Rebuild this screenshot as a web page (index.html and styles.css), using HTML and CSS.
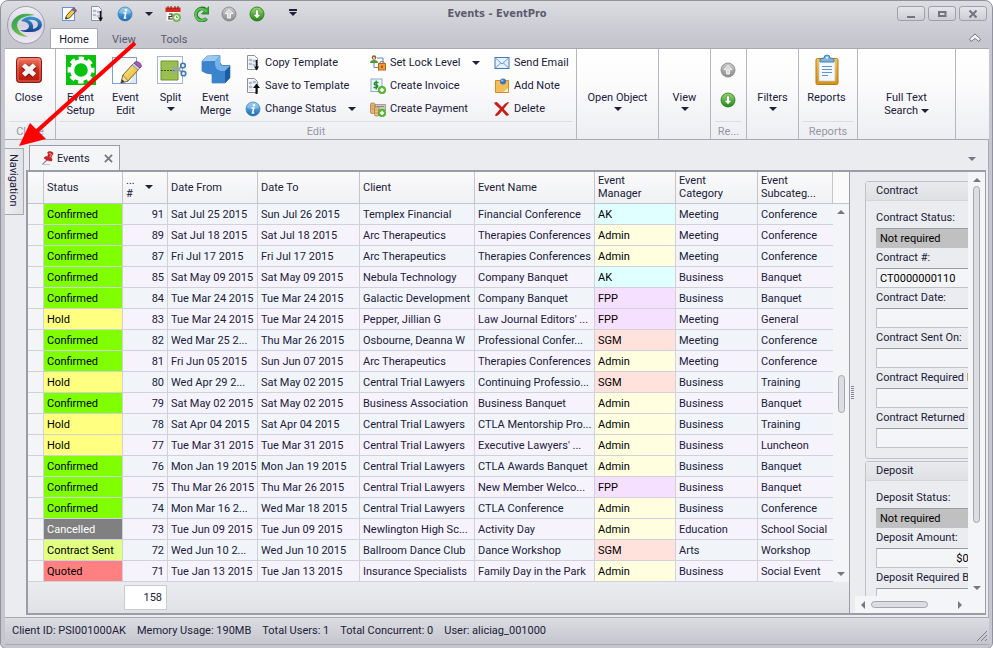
FILE: index.html
```html
<!DOCTYPE html>
<html lang="en">
<head>
  <meta charset="UTF-8" />
  <meta name="viewport" content="width=device-width, initial-scale=1.0"/>
  <title>Events - EventPro</title>
  <link rel="stylesheet" href="styles.css">
</head>
<body>
  <!-- icon sprite -->
  <svg class="sprite" aria-hidden="true">
    <defs>
      <linearGradient id="gRed" x1="0" y1="0" x2="0" y2="1"><stop offset="0" stop-color="#ee7d68"/><stop offset=".5" stop-color="#d02a1c"/><stop offset="1" stop-color="#b8150c"/></linearGradient>
      <linearGradient id="gBlue" x1="0" y1="0" x2="0" y2="1"><stop offset="0" stop-color="#7cc4ee"/><stop offset="1" stop-color="#1668b4"/></linearGradient>
      <linearGradient id="gGreen" x1="0" y1="0" x2="0" y2="1"><stop offset="0" stop-color="#9ad872"/><stop offset="1" stop-color="#1c8a10"/></linearGradient>
      <linearGradient id="gGrey" x1="0" y1="0" x2="0" y2="1"><stop offset="0" stop-color="#cdcdcd"/><stop offset="1" stop-color="#8a8a8a"/></linearGradient>
      <linearGradient id="gGold" x1="0" y1="0" x2="0" y2="1"><stop offset="0" stop-color="#f7c64f"/><stop offset="1" stop-color="#d98f12"/></linearGradient>
      <linearGradient id="gOrb" x1="0" y1="0" x2="0" y2="1"><stop offset="0" stop-color="#f3f0f8"/><stop offset=".5" stop-color="#d6cfe2"/><stop offset="1" stop-color="#efeaf5"/></linearGradient>
      <linearGradient id="gSwoosh" x1="0" y1="0" x2="1" y2="1"><stop offset="0" stop-color="#1f9a55"/><stop offset="1" stop-color="#9bd53a"/></linearGradient>
      <linearGradient id="gEye" x1="0" y1="0" x2="0" y2="1"><stop offset="0" stop-color="#3a9ad0"/><stop offset="1" stop-color="#133f8c"/></linearGradient>
      <linearGradient id="gPencil" x1="0" y1="0" x2="1" y2="1"><stop offset="0" stop-color="#fff3a0"/><stop offset="1" stop-color="#e2a818"/></linearGradient>
    </defs>
    <symbol id="i-edit" viewBox="0 0 32 32">
      <rect x="2.500" y="3.500" width="24" height="26" fill="#fcfdff" stroke="#7f9fd0"/>
      <path d="M20 29h6V14z" fill="#dfe8f5"/>
      <path d="M11 29l2-8L23 10l6 5-11 12z" fill="url(#gPencil)" stroke="#7b6424"/>
      <path d="M11 29l2-8 5 6z" fill="#f2dcb4" stroke="#7b6424" stroke-width=".7"/>
      <path d="M22 11l2-2 6 5-2 2z" fill="#c9ccd6" stroke="#6d7080" stroke-width=".6"/>
      <path d="M24 9l2-1.500q5 .5 5.500 5L30 14z" fill="#a95cb8" stroke="#6b3480" stroke-width=".8"/>
      <path d="M11 29l1-3.500 2.500 2z" fill="#27304d"/>
    </symbol>
    <symbol id="i-edit-small" viewBox="0 0 16 16">
      <rect x="1.500" y="1.500" width="12" height="13" fill="#fcfdff" stroke="#6d92cf"/>
      <path d="M4.500 13l1-3.500L11.500 3l3 2.500-6 6.500z" fill="#f3cb3c" stroke="#3b3a40" stroke-width=".9"/>
      <path d="M11 3.500L12.500 2q2.500.5 3 3L14.500 6z" fill="#9a5cb4" stroke="#4d3068" stroke-width=".6"/>
      <path d="M4.500 13l.5-2 1.500 1.200z" fill="#222"/>
    </symbol>
    <symbol id="i-copy" viewBox="0 0 16 16">
      <path d="M2.500.500h7l3 3v11h-10z" fill="#f6f8fb" stroke="#8b919c"/>
      <path d="M4 4h3v2H4zM8 5h3v2H8zM4 8h3v2H4zM8 9h2v2H8zM4 12h4" fill="#b3becd" stroke="#b3becd" stroke-width=".5"/>
      <path d="M11.500 5v8" stroke="#111" stroke-width="1.500"/><path d="M9 11.500h5l-2.500 4z" fill="#111"/>
    </symbol>
    <symbol id="i-save" viewBox="0 0 16 16">
      <path d="M2.500.500h7l3 3v11h-10z" fill="#f6f8fb" stroke="#8b919c"/>
      <path d="M4 4h3v2H4zM8 3h3v2H8zM4 8h3v2H4zM4 12h4" fill="#b3becd" stroke="#b3becd" stroke-width=".5"/>
      <path d="M11.500 16V8" stroke="#111" stroke-width="2"/><path d="M8 10h7l-3.500-4.500z" fill="#111"/>
    </symbol>
    <symbol id="i-info" viewBox="0 0 16 16">
      <circle cx="8" cy="8" r="7" fill="url(#gBlue)" stroke="#2f78b6" stroke-width=".7"/>
      <path d="M2 7a6 5.500 0 0 1 12 0q-6 2-12 0z" fill="#fff" opacity=".25"/>
      <circle cx="9" cy="4.300" r="1.200" fill="#fff"/><path d="M6.500 7h2.300l-1.300 5h1.800" fill="none" stroke="#fff" stroke-width="1.500"/>
    </symbol>
    <symbol id="i-calendar" viewBox="0 0 16 16">
      <rect x="1" y="2.500" width="14" height="12.500" fill="#f8f7f2" stroke="#d5d1c6" stroke-width=".7"/>
      <path d="M.5 1.500h15V6H.5z" fill="#d02a20"/><path d="M3 0v3M6 0v3M10 0v3M13 0v3" stroke="#8c140e"/>
      <path d="M4 8h3v2.500H4V13h3.500" fill="none" stroke="#333" stroke-width="1.200"/>
      <circle cx="11.500" cy="11.500" r="4" fill="#8cc46a" stroke="#57a03b" stroke-width=".8"/><circle cx="11.500" cy="11.500" r="2.300" fill="#f2f8ee"/><path d="M11.500 10v1.500H13" fill="none" stroke="#4b8f34" stroke-width=".8"/>
    </symbol>
    <symbol id="i-refresh" viewBox="0 0 16 16">
      <path d="M13.500 12.500A6 6 0 1 1 12.500 3.500" fill="none" stroke="#1b7c22" stroke-width="3.800"/>
      <path d="M16 .5V8H8.500z" fill="#35a534" stroke="#1b7c22" stroke-width=".8"/>
      <path d="M13 12.500A5.900 5.900 0 1 1 12.200 4L13.500 5.500" fill="none" stroke="#5cc455" stroke-width="2.200"/>
    </symbol>
    <symbol id="i-up" viewBox="0 0 16 16">
      <circle cx="8" cy="8" r="7" fill="url(#gGrey)" stroke="#7f7f7f" stroke-width=".8"/>
      <path d="M8 3.500l4 4H9.500v4.500h-3V7.500H4z" fill="#d9d9d9" stroke="#f4f4f4"/>
    </symbol>
    <symbol id="i-down" viewBox="0 0 16 16">
      <circle cx="8" cy="8" r="7" fill="url(#gGreen)" stroke="#266b18" stroke-width=".8"/>
      <path d="M8 12.500l4-4H9.500V4h-3v4.500H4z" fill="#fff" stroke="#1f6a12" stroke-width=".4"/>
    </symbol>
    <symbol id="i-close" viewBox="0 0 32 32">
      <rect x="3.500" y="3.500" width="25" height="25" rx="3" fill="url(#gRed)" stroke="#8f1a10"/>
      <rect x="5" y="5" width="22" height="22" rx="2" fill="none" stroke="#f4a899" opacity=".6"/>
      <path d="M10.500 11.500l11 10M21.500 11.500l-11 10" stroke="#7d120b" stroke-width="6.500"/>
      <path d="M10.500 11l11 10M21.500 11l-11 10" stroke="#f5f2f2" stroke-width="5"/>
    </symbol>
    <symbol id="i-gear" viewBox="0 0 32 32">
      <path d="M1 1h30v30H1z" fill="#08c20e"/>
      <circle cx="16" cy="16" r="8.800" fill="none" stroke="#fff" stroke-width="4"/>
      <circle cx="16" cy="16" r="11.500" fill="none" stroke="#fff" stroke-width="4" stroke-dasharray="5.200 3.830" stroke-dashoffset="2.600"/>
    </symbol>
    <symbol id="i-split" viewBox="0 0 32 32">
      <rect x="2.500" y="2.500" width="25" height="27" fill="#fdfdfe" stroke="#a4b6d2"/>
      <path d="M6 7h17v19H6z" fill="#9cc050" stroke="#6d9330"/>
      <path d="M6 16.500h17" stroke="#3d5a17" stroke-dasharray="2 1"/>
      <path d="M17 13l11 5M17 19l11-7" stroke="#9aa3b4" stroke-width="2"/>
      <circle cx="28" cy="11.500" r="2.300" fill="#eaf2fb" stroke="#3f78ba" stroke-width="1.600"/><circle cx="28.500" cy="19.500" r="2.300" fill="#eaf2fb" stroke="#3f78ba" stroke-width="1.600"/>
    </symbol>
    <symbol id="i-merge" viewBox="0 0 32 32">
      <path d="M2 7.500L7 2l13-.5v7l2 3h8v12L25 29H12v-9q-6 0-10-3z" fill="#3f87cf" stroke="#2463a6" stroke-width=".6"/>
      <path d="M2 7.500L7 2l13-.5-5 5.500z" fill="#9bc8ef"/>
      <path d="M15 7l5-5.500v7q0 4 5 3.500h5l-5 5q-10 1-10-6z" fill="#74b1e6"/>
      <path d="M15 7v3q0 6 6 7h4v12H12v-9q-5 0-10-3V7.500z" fill="#3b83cc"/>
      <path d="M25 17l5-5v12l-5 5z" fill="#1d5ba4"/>
    </symbol>
    <symbol id="i-lock" viewBox="0 0 16 16">
      <path d="M7 3h6v5M4 8v4.500h5" fill="none" stroke="#5d86b8"/>
      <circle cx="4" cy="2.500" r="2.300" fill="#9b5a2e"/><circle cx="4" cy="3" r="1.200" fill="#eebf92"/><path d="M0 8q0-3 4-3t4 3z" fill="#4c9a35"/>
      <path d="M10 9V7.500q2-2.500 4 0V9" fill="none" stroke="#888" stroke-width="1.200"/>
      <rect x="8.500" y="8.500" width="7" height="6.500" fill="#f19a38" stroke="#ba651a"/><path d="M12 10.500v2.500" stroke="#7d400c" stroke-width="1.300"/>
    </symbol>
    <symbol id="i-invoice" viewBox="0 0 16 16">
      <rect x="1" y="1" width="11" height="12.500" fill="#eef7fb" stroke="#8aaec5"/>
      <path d="M8.500 4.500H5q-1.500 1.200 0 2.400h2q1.500 1.300 0 2.600H3.500M6.200 2.500v9" fill="none" stroke="#1f8c26" stroke-width="1.300"/>
      <circle cx="12" cy="12" r="3.800" fill="#5fbf36" stroke="#3d9420" stroke-width=".6"/><path d="M12 10v4M10 12h4" stroke="#fff" stroke-width="1.500"/>
    </symbol>
    <symbol id="i-payment" viewBox="0 0 16 16">
      <path d="M5 3.500h10.500v6H5z" fill="#c9c7c0" stroke="#8a857a" stroke-width=".7"/><path d="M7 5.500h7" stroke="#908b80"/>
      <rect x=".5" y="2" width="4.500" height="10.500" rx="1.500" fill="#e2b47a" stroke="#a77236" stroke-width=".7"/>
      <rect x="4.500" y="6" width="4.500" height="9" rx="1.500" fill="#e9bf86" stroke="#a77236" stroke-width=".7"/><path d="M1 5h4M1 8h4M5 9h4M5 12h4" stroke="#b98547" stroke-width=".6"/>
      <circle cx="12" cy="12" r="3.800" fill="#5fbf36" stroke="#3d9420" stroke-width=".6"/><path d="M12 10v4M10 12h4" stroke="#fff" stroke-width="1.500"/>
    </symbol>
    <symbol id="i-mail" viewBox="0 0 16 16">
      <rect x="1" y="2.500" width="14" height="11" fill="#e5f1fb" stroke="#4079bb"/>
      <path d="M1.500 3l6.500 6 6.500-6M1.500 13l5-5M14.500 13l-5-5" fill="none" stroke="#5a90cb" stroke-width=".9"/>
    </symbol>
    <symbol id="i-note" viewBox="0 0 16 16">
      <path d="M1.500 2.500h13v12h-13z" fill="#f3bd58" stroke="#d38b25"/><path d="M9 14l5-4v4z" fill="#fff0cb"/>
      <circle cx="9" cy="3.500" r="3" fill="#3a73bd"/><circle cx="8.300" cy="2.700" r="1.100" fill="#a5c9ee"/>
    </symbol>
    <symbol id="i-delete" viewBox="0 0 16 16">
      <path d="M.5 1.500q2-1 3 0l4.500 4.500q3-4 6-5 2 0 .5 1L9.800 8l5.200 5.500q-1 2-3 1L8 10q-3 4-5 5-2.500 0-2-1l5-6-5.500-5z" fill="#cd1c16"/>
    </symbol>
    <symbol id="i-report" viewBox="0 0 32 32">
      <rect x="5" y="4.500" width="22" height="26" rx="1.500" fill="url(#gGold)" stroke="#b87b10"/>
      <path d="M8 7h16v20H8z" fill="#f3f8fd" stroke="#b9cde0" stroke-width=".7"/>
      <path d="M11 12.500h10M11 15.500h10M11 18.500h10M11 21.500h6" stroke="#6492c8"/>
      <path d="M9 8V6q0-2 4-2 0-3 3-3t3 3q4 0 4 2v2z" fill="#7fb3de" stroke="#427fb5"/><circle cx="16" cy="3.800" r="1" fill="#fff"/>
    </symbol>
    <symbol id="i-pin" viewBox="0 0 16 16">
      <path d="M2 15l5-5" stroke="#888" stroke-width="1.300"/><path d="M1 15.500h9" stroke="#bbb"/>
      <path d="M8 1q3-1.500 5.500 1 1 2-.8 2.500L11.500 8q2 1.500 .5 3.500Q7 12 3.500 8q1-2 4-1.500l1-3Q7 2.500 8 1z" fill="#d21f24" stroke="#9d1115" stroke-width=".6"/>
      <path d="M9 2.500l3 1-2 4" fill="none" stroke="#f39a96"/>
    </symbol>
  </svg>

  <div class="window">
    <header class="titlebar">
      <div class="quick-access">
        <button aria-label="Event Edit"><svg><use href="#i-edit-small"/></svg></button>
        <button aria-label="Copy Template"><svg><use href="#i-copy"/></svg></button>
        <button aria-label="Change Status"><svg><use href="#i-info"/></svg></button>
        <button class="narrow" aria-label="Status options"><i class="caret"></i></button>
        <button aria-label="Calendar"><svg><use href="#i-calendar"/></svg></button>
        <button aria-label="Refresh"><svg><use href="#i-refresh"/></svg></button>
        <button aria-label="Previous"><svg><use href="#i-up"/></svg></button>
        <button aria-label="Next"><svg><use href="#i-down"/></svg></button>
        <button class="customize" aria-label="Customize toolbar"><i class="caret lined"></i></button>
      </div>
      <h1>Events - EventPro</h1>
      <div class="window-buttons">
        <button aria-label="Minimize"><svg viewBox="0 0 12 10"><path d="M2 8h8" stroke="#74747f" stroke-width="2"/></svg></button>
        <button aria-label="Maximize"><svg viewBox="0 0 12 10"><path d="M3 3h6.500v4H3z" fill="none" stroke="#74747f" stroke-width="2"/></svg></button>
        <button aria-label="Close window"><svg viewBox="0 0 12 10"><path d="M2.500 1.500l7 7M9.500 1.500l-7 7" stroke="#74747f" stroke-width="2"/></svg></button>
      </div>
    </header>

    <button class="orb" aria-label="Application menu">
      <svg viewBox="0 0 40 40">
        <circle cx="20" cy="20" r="18.500" fill="url(#gOrb)" stroke="#a19dae"/>
        <path d="M29 10Q15 6 8 14q-7 9 5 16 5 2 9 2-11-5-11-12 1-9 18-10z" fill="url(#gSwoosh)"/>
        <path fill-rule="evenodd" d="M15 16q5-6 13-4 8 2 8 8-1 8-16 7-4 0-6-2 9 1 9-4 0-4-8-5zM22 15q6 2 5 9 5-1 5-5-1-5-10-4z" fill="url(#gEye)"/>
      </svg>
    </button>

    <nav class="ribbon-tabs">
      <a href="#" class="active">Home</a>
      <a href="#">View</a>
      <a href="#">Tools</a>
      <button class="collapse" aria-label="Collapse ribbon"><svg viewBox="0 0 14 10"><path d="M1.500 6L7 1l5.500 5-1.500 2.500L7 5.500 3 8.500z" fill="#f4f4f7" stroke="#777783"/></svg></button>
    </nav>

    <section class="ribbon">
      <div class="group g-close">
        <div class="items">
          <button class="large"><svg><use href="#i-close"/></svg><span>Close</span></button>
        </div>
        <div class="caption">Close</div>
      </div>
      <div class="group g-edit">
        <div class="items">
          <button class="large"><svg><use href="#i-gear"/></svg><span>Event<br>Setup</span></button>
          <button class="large"><svg><use href="#i-edit"/></svg><span>Event<br>Edit</span></button>
          <button class="large"><svg><use href="#i-split"/></svg><span>Split</span><i class="caret"></i></button>
          <button class="large"><svg><use href="#i-merge"/></svg><span>Event<br>Merge</span></button>
          <div class="small-buttons first">
            <button><svg><use href="#i-copy"/></svg>Copy Template</button>
            <button><svg><use href="#i-save"/></svg>Save to Template</button>
            <button><svg><use href="#i-info"/></svg>Change Status<i class="caret"></i></button>
          </div>
          <div class="small-buttons second">
            <button><svg><use href="#i-lock"/></svg>Set Lock Level<i class="caret"></i></button>
            <button><svg><use href="#i-invoice"/></svg>Create Invoice</button>
            <button><svg><use href="#i-payment"/></svg>Create Payment</button>
          </div>
          <div class="small-buttons">
            <button><svg><use href="#i-mail"/></svg>Send Email</button>
            <button><svg><use href="#i-note"/></svg>Add Note</button>
            <button><svg><use href="#i-delete"/></svg>Delete</button>
          </div>
        </div>
        <div class="caption">Edit</div>
      </div>
      <div class="group g-open"><button class="drop">Open Object<i class="caret"></i></button></div>
      <div class="group g-view"><button class="drop">View<i class="caret"></i></button></div>
      <div class="group g-records">
        <div class="items stacked">
          <button aria-label="Previous record"><svg><use href="#i-up"/></svg></button>
          <button aria-label="Next record"><svg><use href="#i-down"/></svg></button>
        </div>
        <div class="caption">Re...</div>
      </div>
      <div class="group g-view"><button class="drop">Filters<i class="caret"></i></button></div>
      <div class="group g-reports">
        <div class="items">
          <button class="large"><svg><use href="#i-report"/></svg><span>Reports</span></button>
        </div>
        <div class="caption">Reports</div>
      </div>
      <div class="group g-search"><button class="drop"><span>Full Text<br>Search <i class="caret"></i></span></button></div>
      <div class="group g-rest"></div>
    </section>

    <main class="workspace">
      <button class="nav-tab">Navigation</button>
      <div class="documents">
        <div class="doc-tabs">
          <div class="doc-tab">
            <svg><use href="#i-pin"/></svg>
            <a href="#">Events</a>
            <button aria-label="Close tab"><svg viewBox="0 0 10 10"><path d="M1 1l8 8M9 1L1 9" stroke="#777783" stroke-width="2"/></svg></button>
          </div>
          <button class="tab-list" aria-label="Open documents"><i class="caret grey"></i></button>
        </div>

        <div class="doc-body">
          <div class="grid-pane">
            <div class="grid">
              <table>
                <colgroup>
                  <col class="c-mark"><col class="c-status"><col class="c-num"><col class="c-from"><col class="c-to"><col class="c-client"><col class="c-name"><col class="c-manager"><col class="c-category"><col class="c-sub">
                </colgroup>
                <thead>
                  <tr>
                    <th></th><th>Status</th><th class="sorted"><div><span>...<br>#</span><i class="caret"></i></div></th><th>Date From</th><th>Date To</th><th>Client</th><th>Event Name</th><th>Event<br>Manager</th><th>Event<br>Category</th><th>Event<br>Subcateg...</th>
                  </tr>
                </thead>
                <tbody>
                  <tr><td></td><td class="confirmed">Confirmed</td><td>91</td><td>Sat Jul 25 2015</td><td>Sun Jul 26 2015</td><td>Templex Financial</td><td>Financial Conference</td><td class="ak">AK</td><td>Meeting</td><td>Conference</td></tr>
                  <tr><td></td><td class="confirmed">Confirmed</td><td>89</td><td>Sat Jul 18 2015</td><td>Sat Jul 18 2015</td><td>Arc Therapeutics</td><td>Therapies Conferences</td><td class="admin">Admin</td><td>Meeting</td><td>Conference</td></tr>
                  <tr><td></td><td class="confirmed">Confirmed</td><td>87</td><td>Fri Jul 17 2015</td><td>Fri Jul 17 2015</td><td>Arc Therapeutics</td><td>Therapies Conferences</td><td class="admin">Admin</td><td>Meeting</td><td>Conference</td></tr>
                  <tr><td></td><td class="confirmed">Confirmed</td><td>85</td><td>Sat May 09 2015</td><td>Sat May 09 2015</td><td>Nebula Technology</td><td>Company Banquet</td><td class="ak">AK</td><td>Business</td><td>Banquet</td></tr>
                  <tr><td></td><td class="confirmed">Confirmed</td><td>84</td><td>Tue Mar 24 2015</td><td>Tue Mar 24 2015</td><td>Galactic Development</td><td>Company Banquet</td><td class="fpp">FPP</td><td>Business</td><td>Banquet</td></tr>
                  <tr><td></td><td class="hold">Hold</td><td>83</td><td>Tue Mar 24 2015</td><td>Tue Mar 24 2015</td><td>Pepper, Jillian G</td><td>Law Journal Editors' ...</td><td class="fpp">FPP</td><td>Meeting</td><td>General</td></tr>
                  <tr><td></td><td class="confirmed">Confirmed</td><td>82</td><td>Wed Mar 25 2...</td><td>Thu Mar 26 2015</td><td>Osbourne, Deanna W</td><td>Professional Confer...</td><td class="sgm">SGM</td><td>Meeting</td><td>Conference</td></tr>
                  <tr><td></td><td class="confirmed">Confirmed</td><td>81</td><td>Fri Jun 05 2015</td><td>Sun Jun 07 2015</td><td>Arc Therapeutics</td><td>Therapies Conferences</td><td class="admin">Admin</td><td>Meeting</td><td>Conference</td></tr>
                  <tr><td></td><td class="hold">Hold</td><td>80</td><td>Wed Apr 29 2...</td><td>Sat May 02 2015</td><td>Central Trial Lawyers</td><td>Continuing Professio...</td><td class="sgm">SGM</td><td>Business</td><td>Training</td></tr>
                  <tr><td></td><td class="confirmed">Confirmed</td><td>79</td><td>Sat May 02 2015</td><td>Sat May 02 2015</td><td>Business Association</td><td>Business Banquet</td><td class="admin">Admin</td><td>Business</td><td>Banquet</td></tr>
                  <tr><td></td><td class="hold">Hold</td><td>78</td><td>Sat Apr 04 2015</td><td>Sat Apr 04 2015</td><td>Central Trial Lawyers</td><td>CTLA Mentorship Pro...</td><td class="admin">Admin</td><td>Business</td><td>Training</td></tr>
                  <tr><td></td><td class="hold">Hold</td><td>77</td><td>Tue Mar 31 2015</td><td>Tue Mar 31 2015</td><td>Central Trial Lawyers</td><td>Executive Lawyers' ...</td><td class="admin">Admin</td><td>Business</td><td>Luncheon</td></tr>
                  <tr><td></td><td class="confirmed">Confirmed</td><td>76</td><td>Mon Jan 19 2015</td><td>Mon Jan 19 2015</td><td>Central Trial Lawyers</td><td>CTLA Awards Banquet</td><td class="admin">Admin</td><td>Business</td><td>Banquet</td></tr>
                  <tr><td></td><td class="confirmed">Confirmed</td><td>75</td><td>Thu Mar 26 2015</td><td>Thu Mar 26 2015</td><td>Central Trial Lawyers</td><td>New Member Welco...</td><td class="fpp">FPP</td><td>Business</td><td>Banquet</td></tr>
                  <tr><td></td><td class="confirmed">Confirmed</td><td>74</td><td>Mon Mar 16 2...</td><td>Wed Mar 18 2015</td><td>Central Trial Lawyers</td><td>CTLA Conference</td><td class="admin">Admin</td><td>Business</td><td>Conference</td></tr>
                  <tr><td></td><td class="cancelled">Cancelled</td><td>73</td><td>Tue Jun 09 2015</td><td>Tue Jun 09 2015</td><td>Newlington High Sc...</td><td>Activity Day</td><td class="admin">Admin</td><td>Education</td><td>School Social</td></tr>
                  <tr><td></td><td class="sent">Contract Sent</td><td>72</td><td>Wed Jun 10 2...</td><td>Wed Jun 10 2015</td><td>Ballroom Dance Club</td><td>Dance Workshop</td><td class="sgm">SGM</td><td>Arts</td><td>Workshop</td></tr>
                  <tr><td></td><td class="quoted">Quoted</td><td>71</td><td>Tue Jan 13 2015</td><td>Tue Jan 13 2015</td><td>Insurance Specialists</td><td>Family Day in the Park</td><td class="admin">Admin</td><td>Business</td><td>Social Event</td></tr>
                </tbody>
              </table>
              <div class="grid-side">
                <div class="head-fill"></div>
                <div class="scroll-v"><i class="caret grey up"></i><div class="track"><div class="thumb mid"></div></div><i class="caret grey"></i></div>
              </div>
            </div>
            <div class="grid-footer"><output>158</output></div>
          </div>

          <div class="splitter"></div>

          <aside class="details">
            <div class="details-main">
              <form class="details-view">
                <section class="box">
                  <h2>Contract</h2>
                  <div class="fields">
                    <label for="cStatus">Contract Status:</label><input id="cStatus" class="locked" value="Not required" readonly>
                    <label for="cNumber">Contract #:</label><input id="cNumber" value="CT0000000110">
                    <label for="cDate">Contract Date:</label><input id="cDate">
                    <label for="cSent">Contract Sent On:</label><input id="cSent">
                    <label for="cRequired">Contract Required By:</label><input id="cRequired">
                    <label for="cReturned">Contract Returned On:</label><input id="cReturned">
                  </div>
                </section>
                <section class="box">
                  <h2>Deposit</h2>
                  <div class="fields">
                    <label for="dStatus">Deposit Status:</label><input id="dStatus" class="locked" value="Not required" readonly>
                    <label for="dAmount">Deposit Amount:</label><input id="dAmount" class="money" value="$0.00">
                    <label for="dRequired">Deposit Required By:</label><input id="dRequired">
                  </div>
                </section>
              </form>
              <div class="scroll-h"><i class="caret grey left"></i><div class="track"><div class="thumb"></div></div><i class="caret grey right"></i></div>
            </div>
            <div class="scroll-v"><i class="caret grey up"></i><div class="track"><div class="thumb tall"></div></div><i class="caret grey"></i></div>
          </aside>
        </div>
      </div>
    </main>

    <footer class="statusbar">
      <span>Client ID: PSI001000AK</span>
      <span>Memory Usage: 190MB</span>
      <span>Total Users: 1</span>
      <span>Total Concurrent: 0</span>
      <span>User: aliciag_001000</span>
      <svg viewBox="0 0 12 12"><path d="M1 11L11 1M5 11l6-6M9 11l2-2" stroke="#7d7d8a" fill="none"/></svg>
    </footer>

    <!-- callout pointing at the Navigation tab -->
    <svg class="arrow" viewBox="0 0 120 106"><path d="M118 2L20 90" stroke="#f00" stroke-width="4"/><path d="M2 105l11-23 16 16z" fill="#f00"/></svg>
  </div>
</body>
</html>
```

FILE: styles.css
```css
* {
  box-sizing: border-box;
}

body {
  margin: 0;
  background: #fff;
  font-family: Roboto, "Open Sans", sans-serif;
  font-size: 11px;
  line-height: 13px;
  color: #20203a;
}

button,
input {
  font: inherit;
  color: inherit;
}

button {
  margin: 0;
  padding: 0;
  border: none;
  background: none;
}

a {
  color: inherit;
  text-decoration: none;
}

svg {
  display: block;
  flex: none;
}

.sprite {
  position: absolute;
  width: 0;
  height: 0;
}

.caret {
  display: inline-block;
  flex: none;
  border: 4px solid transparent;
  border-top-color: #20203a;
  border-bottom-width: 0;
}

.caret.grey {
  border-top-color: #777783;
}

.caret.up {
  transform: rotate(180deg);
}

.caret.left {
  transform: rotate(90deg);
}

.caret.right {
  transform: rotate(-90deg);
}

.caret.lined {
  position: relative;
}

.caret.lined::before {
  content: "";
  position: absolute;
  left: -4px;
  top: -7px;
  width: 8px;
  height: 2px;
  background: #20203a;
}

/* window frame */
.window {
  position: relative;
  display: flex;
  flex-direction: column;
  min-height: 100vh;
  padding: 0 3px 3px 4px;
  border: 1px solid #92929f;
  border-radius: 8px 8px 6px 6px;
  background: linear-gradient(#dcdde1, #c5c6ce 40px);
}

.titlebar {
  display: grid;
  grid-template-columns: 1fr auto 1fr;
  height: 27px;
  align-items: center;
  padding-bottom: 2px;
}

.titlebar h1 {
  margin: 0;
  font-family: "DejaVu Sans Condensed", "DejaVu Sans", sans-serif;
  font-size: 11px;
  color: #5b5b6e;
}

.quick-access {
  display: flex;
  align-items: center;
  padding-left: 50px;
}

.quick-access button {
  display: flex;
  justify-content: center;
  width: 28px;
}

.quick-access .narrow {
  width: 20px;
}

.quick-access .customize {
  width: 44px;
}

.quick-access svg {
  width: 16px;
  height: 16px;
}

.window-buttons {
  display: flex;
  justify-content: flex-end;
  gap: 3px;
  padding-right: 2px;
}

.window-buttons button {
  display: flex;
  align-items: center;
  justify-content: center;
  width: 28px;
  height: 15px;
  border: 1px solid #a0a0ac;
  border-radius: 3px;
  background: linear-gradient(#e6e6ea, #cdced5);
}

.window-buttons svg {
  width: 12px;
  height: 10px;
}

.orb {
  position: absolute;
  left: 5px;
  top: 4px;
}

.orb svg {
  width: 40px;
  height: 40px;
}

/* ribbon */
.ribbon-tabs {
  display: flex;
  height: 20px;
  padding-left: 45px;
}

.ribbon-tabs a {
  width: 48px;
  margin-right: 2px;
  line-height: 23px;
  text-align: center;
  color: #5b5b6e;
}

.ribbon-tabs .active {
  border: 1px solid #a9a9b5;
  border-bottom: none;
  border-radius: 2px 2px 0 0;
  background: #fff;
  color: #20203a;
  line-height: 21px;
}

.collapse {
  margin-left: auto;
  padding-right: 7px;
}

.collapse svg {
  width: 14px;
  height: 10px;
}

.ribbon {
  display: flex;
  height: 92px;
  border: 1px solid #a9a9b5;
  border-width: 1px 0;
  background: linear-gradient(#fff, #fbfbfc 40%, #edeef2);
}

.group {
  display: flex;
  flex-direction: column;
  flex: none;
  border-right: 1px solid #b6b6c0;
}

.group:last-child {
  border-right: none;
}

.g-close { width: 51px; }
.g-edit { width: 521px; }
.g-open { width: 82px; }
.g-view { width: 52px; }
.g-records { width: 36px; }
.g-reports { width: 59px; }
.g-search { width: 98px; }
.g-rest { flex: 1; }

.items {
  display: flex;
  flex: 1;
}

.g-close .items,
.g-reports .items {
  justify-content: center;
  padding-right: 3px;
}

.g-edit .items {
  padding-left: 2px;
}

.caption {
  margin: 0 4px;
  height: 18px;
  line-height: 19px;
  border-top: 1px solid #dcdde2;
  text-align: center;
  color: #9696a3;
}

.large {
  display: flex;
  flex-direction: column;
  align-items: center;
  width: 45px;
  padding-top: 5px;
}

.large svg {
  width: 32px;
  height: 32px;
  margin-bottom: 5px;
}

.large .caret {
  margin-top: 3px;
}

.small-buttons {
  padding: 2px 0 0 7px;
}

.small-buttons.first {
  width: 125px;
}

.small-buttons.second {
  width: 124px;
}

.small-buttons button {
  display: flex;
  align-items: center;
  height: 23px;
}

.small-buttons svg {
  width: 16px;
  height: 16px;
  margin-right: 4px;
}

.small-buttons .caret {
  margin-left: 12px;
}

.items.stacked {
  flex-direction: column;
  align-items: center;
  gap: 14px;
  padding: 13px 2px 0 0;
}

.stacked svg {
  width: 16px;
  height: 16px;
}

.drop {
  display: flex;
  flex-direction: column;
  align-items: center;
  gap: 3px;
  padding-top: 42px;
}

.drop .caret {
  vertical-align: middle;
}

/* workspace */
.workspace {
  display: flex;
  flex: 1;
  align-items: flex-start;
  padding-bottom: 2px;
  border-right: 1px solid #a9a9b5;
  background: #ebecef;
}

.nav-tab {
  width: 19px;
  height: 67px;
  margin-top: 8px;
  padding: 0 2px 2px 0;
  border: 1px solid #a9a9b5;
  border-left: none;
  background: linear-gradient(90deg, #f0f0f3, #e0e1e5);
  writing-mode: vertical-rl;
}

.documents {
  display: flex;
  flex: 1;
  flex-direction: column;
  align-self: stretch;
  min-width: 0;
  padding: 5px 2px 0;
}

.doc-tabs {
  display: flex;
  justify-content: space-between;
  padding: 0 10px 0 3px;
}

.doc-tab {
  display: flex;
  align-items: center;
  width: 91px;
  height: 25px;
  padding: 0 6px 0 11px;
  border: 1px solid #9c9ca9;
  border-bottom: none;
  background: #f4f5f7;
}

.doc-tab > svg {
  width: 14px;
  height: 14px;
  margin-right: 2px;
}

.doc-tab button {
  margin-left: auto;
}

.doc-tab button svg {
  width: 9px;
  height: 9px;
}

.doc-body {
  display: flex;
  flex: 1;
  border: 1px solid #9c9ca9;
  border-width: 2px 1px 2px 2px;
}

.grid-pane {
  display: flex;
  flex: 1;
  flex-direction: column;
  min-width: 0;
  border-right: 1px solid #9c9ca9;
  background: #f4f5f7;
}

.grid {
  display: flex;
}

table {
  flex: 1;
  width: 100%;
  min-width: 0;
  table-layout: fixed;
  border-collapse: separate;
  border-spacing: 0;
}

.c-mark { width: 16px; }
.c-status { width: 79px; }
.c-num { width: 45px; }
.c-from { width: 90px; }
.c-to { width: 102px; }
.c-client { width: 115px; }
.c-name { width: 120px; }
.c-manager { width: 81px; }
.c-category { width: 82px; }
.c-sub { width: 75px; }

th,
td {
  border-right: 1px solid #d0d1da;
  border-bottom: 1px solid #d0d1da;
  overflow: hidden;
  white-space: nowrap;
}

th {
  height: 32px;
  padding: 0 3px 1px;
  border-color: #c3c4cd;
  background: linear-gradient(#fafafb, #f0f1f3);
  font-weight: normal;
  text-align: left;
}

.sorted div {
  display: flex;
  align-items: center;
  gap: 10px;
}

td {
  height: 21px;
  padding: 1px 3px 0;
  line-height: 19px;
}

td:last-child {
  border-right: none;
}

tr:nth-child(odd) td { background-color: #f1f5fa; }
tr:nth-child(even) td { background-color: #f7f3fd; }

tr td:first-child {
  background-color: #f4f5f7;
}

td:nth-child(3) {
  text-align: right;
}

tr .confirmed,
tr .hold,
tr .sent,
tr .quoted,
tr .ak,
tr .admin,
tr .fpp,
tr .sgm {
  color: #000;
}

tbody tr .confirmed { background-color: #80ff00; }
tbody tr .hold { background-color: #ffff80; }
tbody tr .cancelled { background-color: #808080; color: #fff; }
tbody tr .sent { background-color: #e1ff80; }
tbody tr .quoted { background-color: #ff8080; }
tbody tr .ak { background-color: #e0ffff; }
tbody tr .admin { background-color: #ffffe0; }
tbody tr .fpp { background-color: #f6e0ff; }
tbody tr .sgm { background-color: #ffe2dc; }

.grid-side {
  display: flex;
  flex-direction: column;
  width: 16px;
}

.head-fill {
  height: 32px;
  border-bottom: 1px solid #c3c4cd;
  background: #fafafb;
}

.grid-footer {
  flex: 1;
  padding: 3px 0 3px 96px;
  background: linear-gradient(#ebecef, #e0e1e5);
}

.grid-footer output {
  display: block;
  width: 43px;
  height: 25px;
  padding-right: 4px;
  border: 1px solid #c9cad2;
  background: #fff;
  line-height: 24px;
  text-align: right;
}

/* scrollbars */
.scroll-v,
.scroll-h {
  display: flex;
  flex: none;
  align-items: center;
  background: #f4f5f7;
}

.scroll-v {
  flex-direction: column;
  width: 17px;
  padding: 6px 0;
}

.grid-side .scroll-v {
  flex: 1;
  width: 16px;
}

.scroll-h {
  height: 17px;
  padding: 0 4px;
}

.details > .scroll-v {
  padding-bottom: 23px;
}

.track {
  display: flex;
  flex: 1;
}

.scroll-v .track {
  flex-direction: column;
  margin: 4px 0;
}

.scroll-h .track {
  margin: 0 4px;
}

.thumb {
  width: 57px;
  height: 7px;
  border: 1px solid #a5a5b1;
  border-radius: 4px;
  background: #dcdde2;
}

.thumb.mid {
  width: 7px;
  height: 38px;
  margin-top: 157px;
}

.thumb.tall {
  width: 7px;
  height: 85%;
}

/* details */
.splitter {
  width: 5px;
  background: repeating-linear-gradient(#8a8a96 0 1px, transparent 1px 2px) center / 3px 14px no-repeat;
}

.details {
  display: flex;
  width: 130px;
}

.details-main {
  display: flex;
  flex: 1;
  flex-direction: column;
  min-width: 0;
}

.details-view {
  flex: 1 0 auto;
  height: 0;
  overflow: hidden;
  padding: 9px 0 0 10px;
}

.box {
  width: 150px;
  margin-bottom: 2px;
  border: 1px solid #bfc0c9;
  border-radius: 3px;
}

.box h2 {
  margin: 0 0 7px;
  padding-left: 10px;
  border-bottom: 1px solid #d5d6dc;
  background: linear-gradient(#e9eaed, #dfe0e4);
  font-size: 11px;
  font-weight: normal;
  line-height: 18px;
}

.fields {
  padding: 0 10px 10px;
}

.fields label {
  display: block;
  line-height: 20px;
  white-space: nowrap;
}

.fields input {
  display: block;
  width: 112px;
  height: 20px;
  padding: 0 3px;
  border: 1px solid #bfc0c9;
  border-top-color: #9c9ca9;
  border-radius: 0;
  background: #f4f5f7;
  color: #000;
}

.fields .locked {
  background: #c0c0c0;
}

.fields .money {
  text-align: right;
}

/* status bar */
.statusbar {
  display: flex;
  align-items: center;
  gap: 11px;
  height: 28px;
  padding: 0 1px 2px 7px;
  border-top: 1px solid #a9a9b5;
  border-bottom: 1px solid #a9a9b5;
  background: linear-gradient(#dcdde1, #c5c6ce);
}

.statusbar svg {
  width: 12px;
  height: 12px;
  margin: 12px 0 0 auto;
}

.arrow {
  position: absolute;
  left: 16px;
  top: 40px;
  width: 120px;
  height: 106px;
  pointer-events: none;
}
```
